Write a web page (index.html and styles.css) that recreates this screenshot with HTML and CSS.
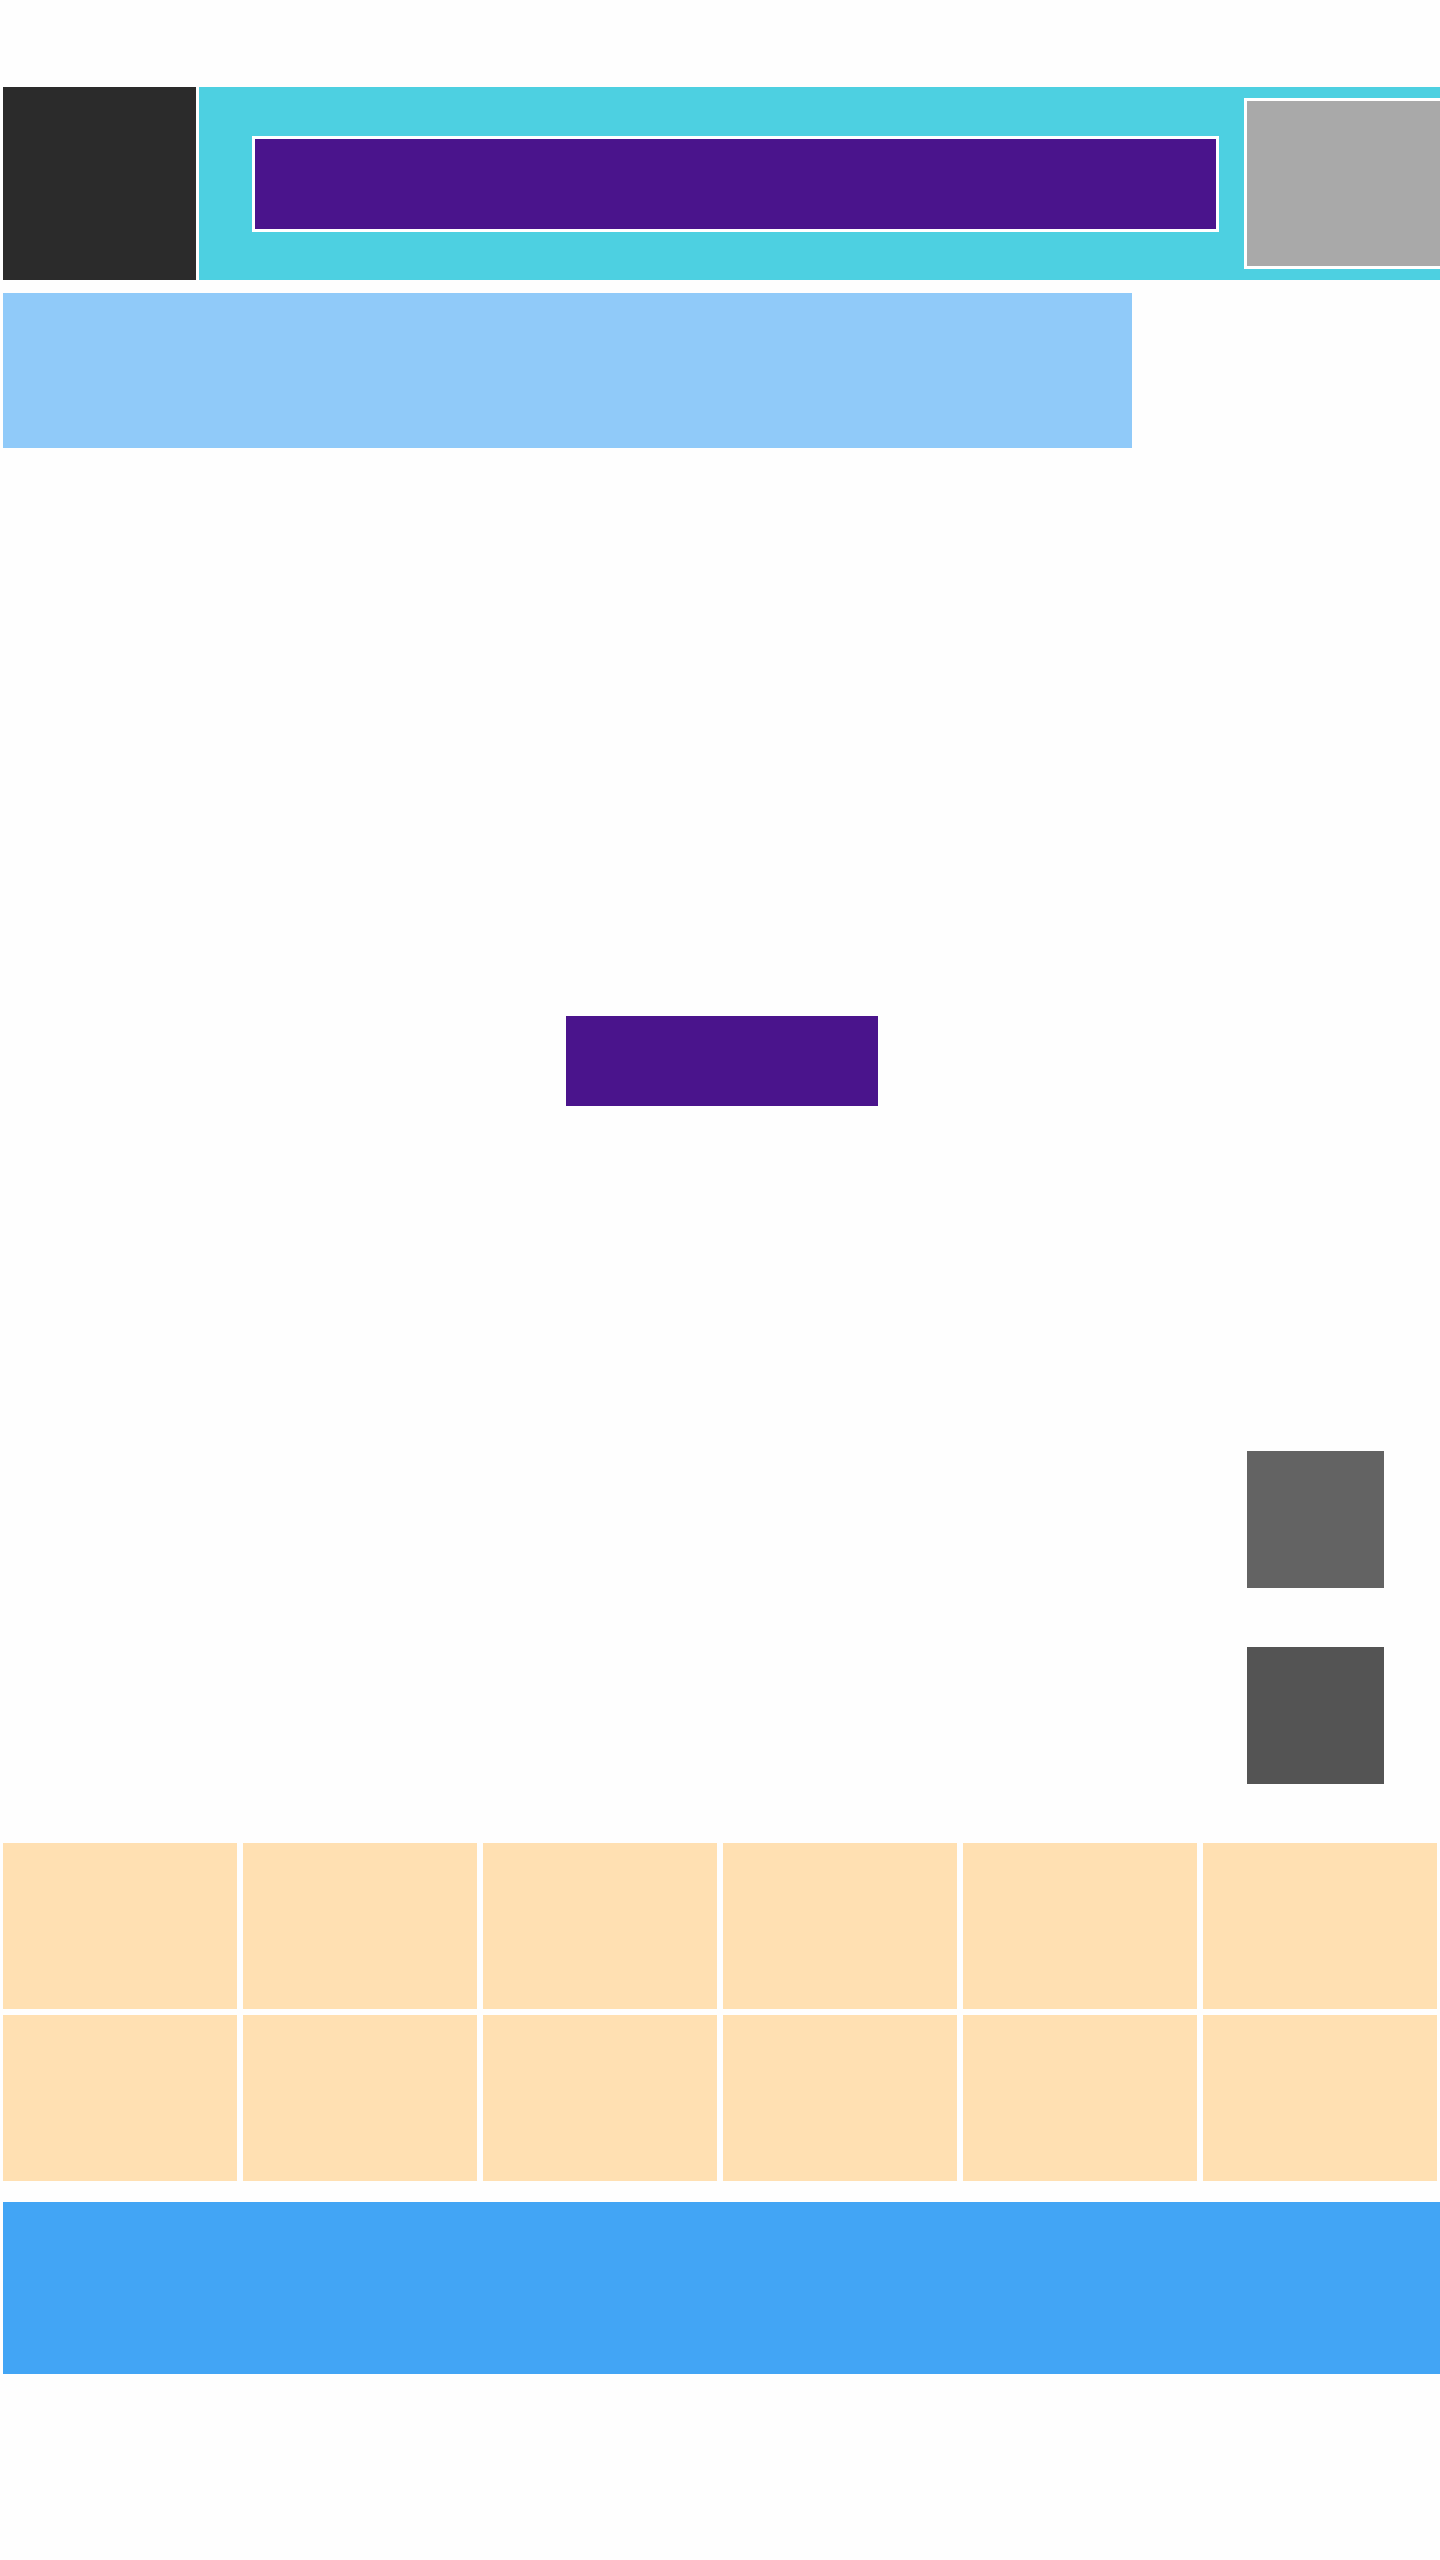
FILE: index.html
```html
<!DOCTYPE html>
<html lang="en">
<head>
    <meta charset="UTF-8">
    <meta name="viewport" content="width=device-width, initial-scale=1.0">
    <title>Dashboard</title>
    <link rel="stylesheet" href="styles.css">
</head>
<body>

    <div class="page">
        <div class="topbar">
            <div class="logo"></div>
            <div class="banner">
                <div class="search"></div>
                <div class="avatar"></div>
            </div>
        </div>

        <div class="notice"></div>

        <div class="cta-row">
            <div class="cta"></div>
        </div>

        <div class="side-tools">
            <div class="tool"></div>
            <div class="tool tool-dark"></div>
        </div>

        <div class="tiles">
            <div class="tile"></div>
            <div class="tile"></div>
            <div class="tile"></div>
            <div class="tile"></div>
            <div class="tile"></div>
            <div class="tile"></div>
            <div class="tile"></div>
            <div class="tile"></div>
            <div class="tile"></div>
            <div class="tile"></div>
            <div class="tile"></div>
            <div class="tile"></div>
        </div>

        <div class="footer"></div>
    </div>

</body>
</html>
```

FILE: styles.css
```css
body {
    font-family: "Liberation Sans", Arial, sans-serif;
    background-color: #fefefe;
    margin: 0;
}
.page {
    padding: 87px 0 186px 3px;
}
.topbar {
    display: flex;
    gap: 3px;
    height: 193px;
}
.logo {
    flex: none;
    width: 193px;
    background-color: #2b2b2b;
}
.banner {
    flex: 1;
    display: flex;
    align-items: center;
    gap: 25px;
    padding-left: 53px;
    background-color: #4dd0e1;
    overflow: hidden;
}
.search {
    flex: none;
    box-sizing: border-box;
    width: 967px;
    height: 96px;
    border: 3px solid #ffffff;
    background-color: #4a148c;
}
.avatar {
    flex: none;
    box-sizing: border-box;
    width: 200px;
    height: 171px;
    border: 3px solid #ffffff;
    background-color: #a9a9a9;
}
.notice {
    width: 1129px;
    height: 155px;
    margin-top: 13px;
    background-color: #90caf9;
}
.cta-row {
    display: flex;
    justify-content: center;
    margin-top: 568px;
}
.cta {
    width: 312px;
    height: 90px;
    background-color: #4a148c;
}
.side-tools {
    display: flex;
    flex-direction: column;
    align-items: flex-end;
    gap: 59px;
    margin-top: 345px;
    padding-right: 56px;
}
.tool {
    width: 137px;
    height: 137px;
    background-color: #636363;
}
.tool-dark {
    background-color: #545454;
}
.tiles {
    display: grid;
    grid-template-columns: repeat(6, 1fr);
    grid-auto-rows: 166px;
    gap: 6px;
    margin: 59px 3px 0 0;
}
.tile {
    background-color: #ffe0b2;
}
.footer {
    height: 172px;
    margin-top: 21px;
    background-color: #42a5f5;
}
```
